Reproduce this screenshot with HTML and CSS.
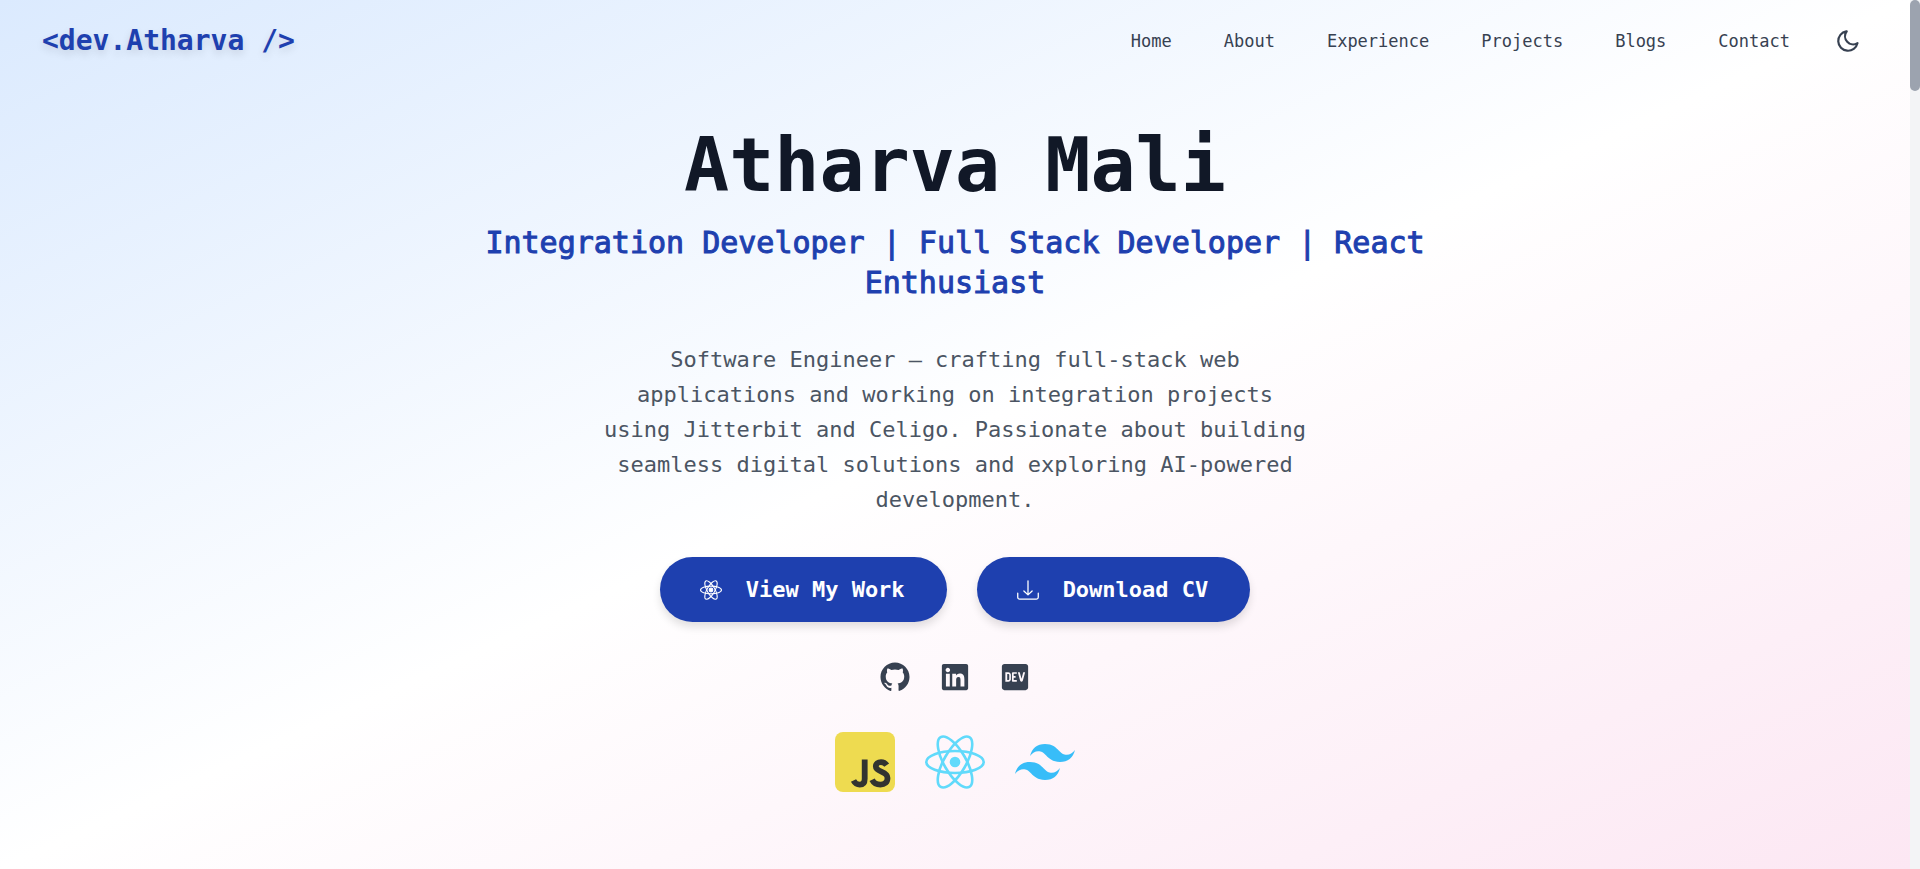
FILE: index.html
```html
<!DOCTYPE html>
<html lang="en">
<head>
<meta charset="utf-8">
<meta name="viewport" content="width=device-width, initial-scale=1">
<title>Atharva Mali</title>
<link rel="stylesheet" href="styles.css">
</head>
<body>
<div class="shell">
  <div class="page">
    <header class="header">
      <a class="logo" href="#home">&lt;dev.Atharva /&gt;</a>
      <div class="header-end">
        <nav class="nav" aria-label="Main">
          <a href="#home">Home</a>
          <a href="#about">About</a>
          <a href="#experience">Experience</a>
          <a href="#projects">Projects</a>
          <a href="#blogs">Blogs</a>
          <a href="#contact">Contact</a>
        </nav>
        <button class="theme" type="button" aria-label="Switch to dark mode">
          <svg viewBox="0 0 24 24" fill="none" stroke="currentColor" stroke-width="2" stroke-linecap="round" stroke-linejoin="round"><path d="M12 3c.132 0 .263 0 .393 0a7.5 7.5 0 0 0 7.92 12.446a9 9 0 1 1 -8.313 -12.454z" transform="rotate(-10 12 12)"/></svg>
        </button>
      </div>
    </header>
    <main class="hero">
      <h1 class="name">Atharva Mali</h1>
      <h2 class="role">Integration Developer | Full Stack Developer | React Enthusiast</h2>
      <p class="intro">Software Engineer — crafting full-stack web applications and working on integration projects using Jitterbit and Celigo. Passionate about building seamless digital solutions and exploring AI-powered development.</p>
      <div class="actions">
        <a class="cta" href="#projects">
          <svg viewBox="0 0 24 24" fill="none" stroke="currentColor" stroke-width="1.200" aria-hidden="true"><ellipse cx="12" cy="12" rx="11.4" ry="4.2"/><ellipse cx="12" cy="12" rx="11.4" ry="4.2" transform="rotate(60 12 12)"/><ellipse cx="12" cy="12" rx="11.4" ry="4.2" transform="rotate(120 12 12)"/><circle cx="12" cy="12" r="2" fill="currentColor"/></svg>
          View My Work
        </a>
        <a class="cta" href="#cv" download>
          <svg viewBox="0 0 24 24" fill="none" stroke="currentColor" stroke-width="1.400" stroke-linecap="round" stroke-linejoin="round" aria-hidden="true"><path d="M12 2v15M7.500 13l4.500 4.300 4.500-4.300M.8 15.500v4.500a2 2 0 0 0 2 2h18.400a2 2 0 0 0 2-2v-4.500"/></svg>
          Download CV
        </a>
      </div>
      <div class="social">
        <a href="#github" aria-label="GitHub"><svg viewBox="-.4 -.2 24.800 24.800" fill="currentColor"><path d="M12 .297c-6.630 0-12 5.373-12 12 0 5.303 3.438 9.800 8.205 11.385.6.113.82-.258.82-.577 0-.285-.01-1.040-.015-2.040-3.338.724-4.042-1.610-4.042-1.610C4.422 18.070 3.633 17.700 3.633 17.700c-1.087-.744.084-.729.084-.729 1.205.084 1.838 1.236 1.838 1.236 1.070 1.835 2.809 1.305 3.495.998.108-.776.417-1.305.76-1.605-2.665-.3-5.466-1.332-5.466-5.930 0-1.310.465-2.380 1.235-3.220-.135-.303-.54-1.523.105-3.176 0 0 1.005-.322 3.300 1.230.96-.267 1.980-.399 3-.405 1.020.006 2.040.138 3 .405 2.280-1.552 3.285-1.230 3.285-1.230.645 1.653.24 2.873.12 3.176.765.840 1.230 1.910 1.230 3.220 0 4.610-2.805 5.625-5.475 5.920.42.360.81 1.096.81 2.220 0 1.606-.015 2.896-.015 3.286 0 .315.21.690.825.570C20.565 22.092 24 17.592 24 12.297c0-6.627-5.373-12-12-12"/></svg></a>
        <a href="#linkedin" aria-label="LinkedIn"><svg viewBox="0 0 448 512" fill="currentColor"><path d="M416 32H31.900C14.300 32 0 46.500 0 64.300v383.400C0 465.500 14.300 480 31.900 480H416c17.600 0 32-14.500 32-32.300V64.300c0-17.800-14.400-32.300-32-32.300zM135.400 416H69V202.200h66.500V416zm-33.200-243c-21.300 0-38.500-17.300-38.500-38.500S80.900 96 102.200 96c21.200 0 38.500 17.300 38.500 38.500 0 21.300-17.200 38.500-38.500 38.500zm282.100 243h-66.400V312c0-24.800-.5-56.700-34.500-56.700-34.600 0-39.900 27-39.900 54.900V416h-66.400V202.200h63.700v29.200h.9c8.900-16.800 30.600-34.500 62.900-34.500 67.200 0 79.700 44.300 79.700 101.900V416z"/></svg></a>
        <a href="#dev" aria-label="DEV Community"><svg viewBox="0 0 448 512" fill="currentColor"><path d="M120.120 208.290c-3.880-2.900-7.770-4.350-11.650-4.350H91.030v104.470h17.450c3.880 0 7.770-1.450 11.650-4.350 3.880-2.900 5.820-7.250 5.820-13.060v-69.650c-.01-5.800-1.960-10.160-5.830-13.060zM404.100 32H43.900C19.700 32 .06 51.590 0 75.800v360.400C.06 460.410 19.700 480 43.900 480h360.200c24.210 0 43.840-19.590 43.900-43.800V75.800c-.06-24.210-19.700-43.800-43.900-43.800zM154.200 291.190c0 18.810-11.610 47.310-48.360 47.250h-46.400V172.980h47.380c35.440 0 47.360 28.460 47.370 47.280l.01 70.930zm100.680-88.660H201.600v38.420h32.570v29.570H201.600v38.410h53.290v29.570h-62.180c-11.160.29-20.440-8.530-20.720-19.690V193.700c-.27-11.150 8.560-20.410 19.710-20.690h63.190l-.01 29.520zm103.640 115.290c-13.200 30.750-36.850 24.630-47.440 0l-38.530-144.800h32.570l29.710 113.720 29.570-113.720h32.580l-38.460 144.800z"/></svg></a>
      </div>
      <div class="tech">
        <svg class="js" viewBox="0 0 60 60" role="img" aria-label="JavaScript"><rect width="60" height="60" rx="8" fill="#eedb50"/><g fill="none" stroke="#323330" stroke-width="5.800"><path d="M29.700 27.500v19.200c0 4.200-1.800 5.900-4.900 5.900-2.900 0-4.900-1.400-6.300-4.100"/><path d="M51.700 33.200c-1.500-2.200-3.300-3.100-5.700-3.100-3.100 0-5.200 1.600-5.200 4.200 0 6.300 11.700 4.300 11.700 11.600 0 4.300-2.900 6.700-7.100 6.700-3.900 0-6.700-1.700-8.300-4.900"/></g></svg>
        <svg viewBox="0 0 60 60" fill="none" stroke="#61dafb" stroke-width="2.600" role="img" aria-label="React"><circle cx="30" cy="30" r="5.300" fill="#61dafb" stroke="none"/><ellipse cx="30" cy="30" rx="28.700" ry="11"/><ellipse cx="30" cy="30" rx="28.700" ry="11" transform="rotate(60 30 30)"/><ellipse cx="30" cy="30" rx="28.700" ry="11" transform="rotate(120 30 30)"/></svg>
        <svg viewBox="0 0 24 24" fill="#38bdf8" role="img" aria-label="Tailwind CSS"><path d="M12.001 4.800c-3.200 0-5.200 1.600-6 4.800 1.200-1.600 2.600-2.200 4.200-1.800.913.228 1.565.89 2.288 1.624C13.666 10.618 15.027 12 18.001 12c3.200 0 5.200-1.600 6-4.800-1.200 1.600-2.600 2.200-4.200 1.800-.913-.228-1.565-.89-2.288-1.624C16.337 6.182 14.976 4.800 12.001 4.800zm-6 7.200c-3.200 0-5.200 1.600-6 4.800 1.200-1.600 2.600-2.200 4.200-1.800.913.228 1.565.89 2.288 1.624 1.177 1.194 2.538 2.576 5.512 2.576 3.200 0 5.200-1.600 6-4.800-1.200 1.600-2.600 2.200-4.200 1.800-.913-.228-1.565-.89-2.288-1.624C10.337 13.382 8.976 12 6.001 12z"/></svg>
      </div>
    </main>
  </div>
  <div class="scrollbar" aria-hidden="true"><div class="scrollbar-thumb"></div></div>
</div>
</body>
</html>
```
FILE: styles.css
```css
* {
  box-sizing: border-box;
}

body {
  margin: 0;
  font-family: "DejaVu Sans Mono", "Liberation Mono", monospace;
  color: #374151;
}

a {
  color: inherit;
  text-decoration: none;
}

svg {
  display: block;
}

.shell {
  display: grid;
  grid-template-columns: 1fr 10px;
  min-height: 100vh;
}

.page {
  background: linear-gradient(to bottom right, #dbeafe, #ffffff, #fce7f3);
}

.header {
  display: flex;
  align-items: center;
  justify-content: space-between;
  height: 81px;
  padding: 0 49px 0 42px;
}

.logo {
  font-size: 28px;
  font-weight: 700;
  line-height: 40px;
  color: #1e40af;
  text-shadow: 0 4px 8px rgba(0, 0, 0, 0.12);
}

.header-end {
  display: flex;
  align-items: center;
  gap: 45px;
}

.nav {
  display: flex;
  gap: 52px;
  font-size: 17px;
  line-height: 24px;
}

.theme {
  width: 26px;
  height: 26px;
  padding: 0;
  border: 0;
  background: none;
  color: #374151;
}

.theme svg {
  width: 26px;
  height: 26px;
}

.hero {
  display: flex;
  flex-direction: column;
  align-items: center;
  padding: 46px 40px;
  text-align: center;
}

.name {
  margin: 0 0 20px;
  font-size: 75px;
  font-weight: 700;
  line-height: 76px;
  color: #111827;
}

.role {
  max-width: 960px;
  margin: 0 0 39px;
  font-size: 30px;
  font-weight: 400;
  line-height: 40px;
  color: #1e40af;
  -webkit-text-stroke: 1px #1e40af;
}

.intro {
  max-width: 710px;
  margin: 0 0 40px;
  font-size: 22px;
  line-height: 35px;
  color: #4b5563;
}

.actions {
  display: flex;
  gap: 30px;
  margin-bottom: 40px;
}

.cta {
  display: flex;
  align-items: center;
  gap: 24px;
  height: 65px;
  padding: 0 42px 0 40px;
  border-radius: 33px;
  background: #1e40af;
  color: #ffffff;
  font-size: 22px;
  font-weight: 700;
  box-shadow: 0 5px 8px rgba(0, 0, 0, 0.12);
}

.cta svg {
  width: 22px;
  height: 22px;
}

.social {
  display: flex;
  gap: 30px;
  margin-bottom: 40px;
}

.social svg {
  width: 30px;
  height: 30px;
}

.tech {
  display: flex;
  gap: 30px;
}

.tech svg {
  width: 60px;
  height: 60px;
}

.scrollbar {
  background: #f3f4f6;
}

.scrollbar-thumb {
  height: 91px;
  border-radius: 5px;
  background: #9ca3af;
}
```
